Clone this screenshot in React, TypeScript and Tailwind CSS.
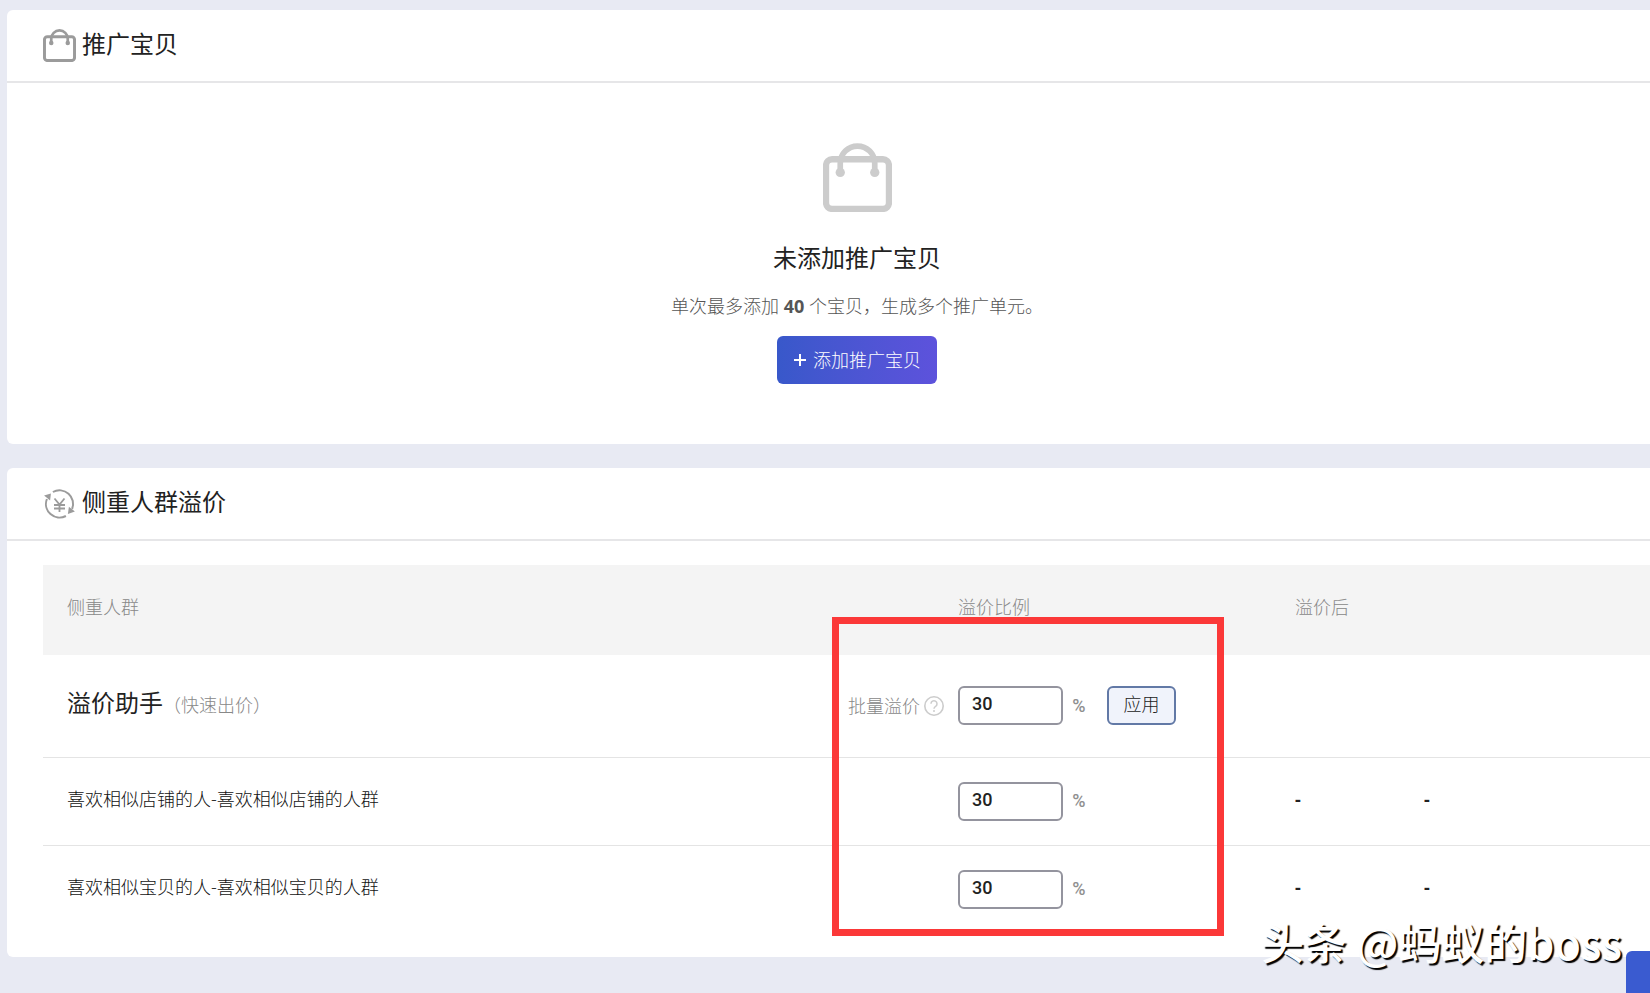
import React, { useState } from 'react';

interface CrowdRow {
  id: string;
  name: string;
  ratio: string;
}

const initialRows: CrowdRow[] = [
  { id: 'shop', name: '喜欢相似店铺的人-喜欢相似店铺的人群', ratio: '30' },
  { id: 'item', name: '喜欢相似宝贝的人-喜欢相似宝贝的人群', ratio: '30' }
];

const BagIcon: React.FC<{ className?: string }> = ({ className }) => (
  <svg viewBox="0 0 68 68" fill="none" stroke="currentColor" className={className} aria-hidden="true">
    <rect x="3" y="16" width="62" height="49" rx="6" strokeWidth="6.2" />
    <path d="M17 29V20a17 17 0 0 1 34 0v9" strokeWidth="5.6" />
    <circle cx="17" cy="29" r="4.6" fill="currentColor" stroke="none" />
    <circle cx="51" cy="29" r="4.6" fill="currentColor" stroke="none" />
  </svg>
);

const YenCycleIcon: React.FC<{ className?: string }> = ({ className }) => (
  <svg viewBox="0 0 32 32" fill="none" stroke="currentColor" strokeWidth="2" className={className} aria-hidden="true">
    <path d="M9.4 4A13.6 13.6 0 0 1 28.6 21" />
    <path d="M22.4 28A13.6 13.6 0 0 1 3.4 11" />
    <path d="M0.6 7.6 7.4 5.4 6.6 12.4Z" fill="currentColor" stroke="none" />
    <path d="M31.4 23.6 24.4 26 25.4 18.8Z" fill="currentColor" stroke="none" />
    <path d="M11 10.5l5 6 5-6M16 16.5V24M10.5 17h11M10.5 20.5h11" strokeWidth="1.8" />
  </svg>
);

const HelpIcon: React.FC = () => (
  <svg viewBox="0 0 20 20" fill="none" stroke="currentColor" className="h-5 w-5 text-[#cccccc]" aria-hidden="true">
    <circle cx="10" cy="10" r="9.2" strokeWidth="1.6" />
    <path d="M7 7.8a3 3 0 1 1 4.6 2.5c-1.1.7-1.6 1.2-1.6 2.4" strokeWidth="1.5" />
    <circle cx="10" cy="15" r="1" fill="currentColor" stroke="none" />
  </svg>
);

interface PanelProps {
  title: string;
  icon: React.ReactNode;
  children: React.ReactNode;
}

const Panel: React.FC<PanelProps> = ({ title, icon, children }) => (
  <section className="-mr-[57px] rounded-md bg-white">
    <header className="flex h-[73px] items-center gap-1.5 border-b-2 border-[#e6e6e8] px-9">
      {icon}
      <h2 className="pb-1 text-2xl">{title}</h2>
    </header>
    {children}
  </section>
);

interface RatioInputProps {
  id: string;
  label?: string;
  value: string;
  onChange: (value: string) => void;
}

const RatioInput: React.FC<RatioInputProps> = ({ id, label, value, onChange }) => (
  <div className="flex items-center gap-2">
    <input
      id={id}
      type="text"
      aria-label={label}
      value={value}
      onChange={(e) => onChange(e.target.value)}
      className="h-[39px] w-[105px] rounded-md border-2 border-[#94949e] bg-white px-3 pb-1 font-[Roboto] text-lg font-medium text-[#222222] outline-none"
    />
    <span className="w-4 text-center font-[Roboto] text-lg font-medium text-[#909090]">%</span>
  </div>
);

export default function App() {
  const [rows, setRows] = useState<CrowdRow[]>(initialRows);
  const [batch, setBatch] = useState('30');

  const updateRow = (id: string, ratio: string) => {
    setRows(rows.map(r => (r.id === id ? { ...r, ratio } : r)));
  };

  const applyBatch = () => setRows(rows.map(r => ({ ...r, ratio: batch })));

  return (
    <div className="relative min-h-screen overflow-hidden bg-[#e8eaf3] pt-2.5 pb-9 pl-[7px] font-['Open_Sans','Noto_Sans_CJK_SC',sans-serif] text-[#222222]">
      <main className="flex flex-col gap-6">
        <Panel title="推广宝贝" icon={<BagIcon className="h-[33px] w-[33px] text-[#9b9b9b]" />}>
          <div className="flex flex-col items-center pt-15 pb-15">
            <BagIcon className="h-[69px] w-[69px] text-[#cccccc]" />
            <h3 className="mt-7 text-2xl leading-9">未添加推广宝贝</h3>
            <p className="mt-4 text-lg leading-7 font-light text-[#555555]">
              单次最多添加 <b className="font-bold">40</b> 个宝贝，生成多个推广单元。
            </p>
            <button
              type="button"
              className="mt-4 flex h-12 items-center gap-1.5 rounded-md bg-linear-to-r from-[#3858ca] to-[#5d52dc] px-4 text-lg font-light text-white"
            >
              <svg viewBox="0 0 14 14" className="h-3.5 w-3.5" stroke="currentColor" strokeWidth="2" aria-hidden="true">
                <path d="M7 1v12M1 7h12" />
              </svg>
              添加推广宝贝
            </button>
          </div>
        </Panel>

        <Panel title="侧重人群溢价" icon={<YenCycleIcon className="h-8 w-[33px] text-[#9b9b9b]" />}>
          <div className="relative mx-9 mt-6 pb-6">
            <table className="w-full table-fixed text-left text-lg">
              <colgroup>
                <col />
                <col className="w-[337px]" />
                <col className="w-[129px]" />
                <col className="w-[247px]" />
              </colgroup>
              <thead>
                <tr className="h-[90px] bg-[#f4f4f4] text-[#888888]">
                  <th className="pb-1.5 pl-6 font-light">侧重人群</th>
                  <th className="pb-1.5 font-light">溢价比例</th>
                  <th className="pb-1.5 font-light" colSpan={2}>溢价后</th>
                </tr>
              </thead>
              <tbody>
                <tr className="h-[102px] border-b border-[#e4e4e4]">
                  <td className="pr-3.5 pl-6">
                    <div className="flex items-center justify-between">
                      <div className="pb-1.5">
                        <span className="text-2xl">溢价助手</span>
                        <span className="font-light text-[#888888]">（快速出价）</span>
                      </div>
                      <label htmlFor="batch" className="flex items-center gap-1 font-light text-[#888888]">
                        批量溢价
                        <HelpIcon />
                      </label>
                    </div>
                  </td>
                  <td>
                    <div className="flex items-center gap-5">
                      <RatioInput id="batch" value={batch} onChange={setBatch} />
                      <button
                        type="button"
                        onClick={applyBatch}
                        className="h-[39px] w-[69px] rounded-md border-2 border-[#6279a6] bg-[#f0f3fb] pb-1 font-light"
                      >
                        应用
                      </button>
                    </div>
                  </td>
                  <td />
                  <td />
                </tr>
                {rows.map(row => (
                  <tr key={row.id} className="h-[88px] border-b border-[#e4e4e4] last:border-b-0">
                    <td className="pb-1 pl-6 font-light text-[#111111]">{row.name}</td>
                    <td>
                      <RatioInput id={row.id} label={row.name} value={row.ratio} onChange={v => updateRow(row.id, v)} />
                    </td>
                    <td className="pb-1 font-bold">-</td>
                    <td className="pb-1 font-bold">-</td>
                  </tr>
                ))}
              </tbody>
            </table>

            {/* Highlight over the ratio column */}
            <div className="pointer-events-none absolute top-[52px] right-[447px] bottom-[21px] w-[392px] border-[7px] border-[#fb3838]" />
          </div>
        </Panel>
      </main>

      <div className="pointer-events-none absolute right-7 bottom-6 font-['Noto_Sans_CJK_SC',sans-serif] text-[43px] leading-[56px] font-medium text-white [text-shadow:2px_2px_1px_#000]">
        头条 @蚂蚁的boss
      </div>
      <button type="button" aria-label="更多" className="absolute right-0 bottom-0 h-[42px] w-6 rounded-tl-md bg-[#3a5bd0]" />
    </div>
  );
}
